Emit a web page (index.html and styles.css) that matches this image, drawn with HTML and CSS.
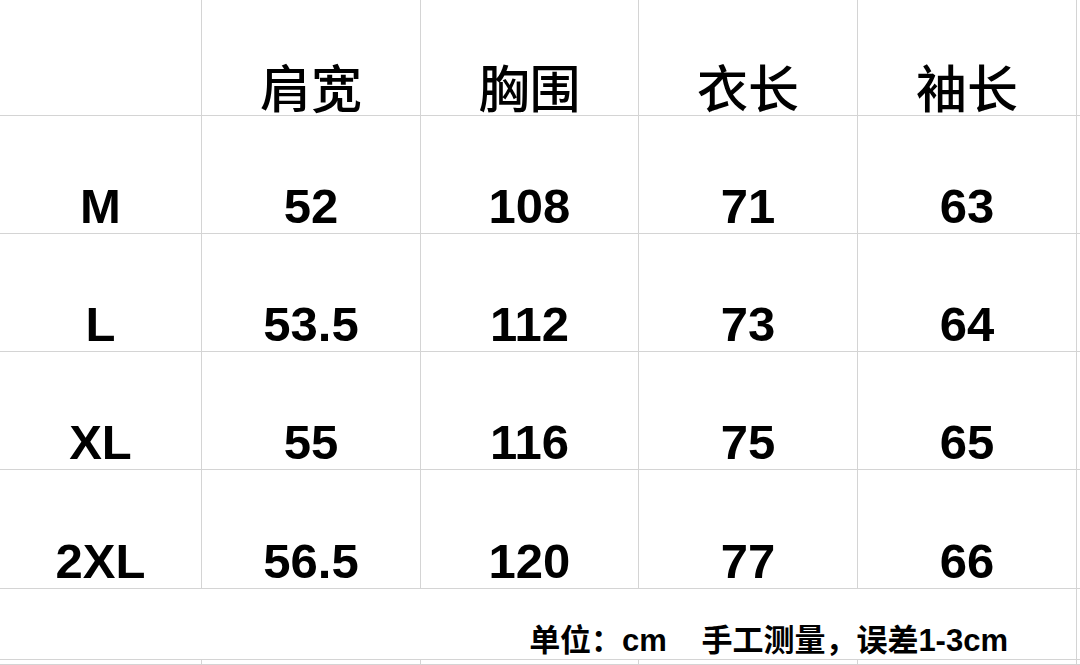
FILE: index.html
```html
<!DOCTYPE html>
<html lang="zh-CN">
<head>
<meta charset="utf-8">
<title>尺码表</title>
<link rel="stylesheet" href="styles.css">
</head>
<body>
<div class="sheet">
  <div class="cell"></div>
  <div class="cell head">肩宽</div>
  <div class="cell head">胸围</div>
  <div class="cell head">衣长</div>
  <div class="cell head">袖长</div>
  <div class="cell edge"></div>

  <div class="cell num">M</div>
  <div class="cell num">52</div>
  <div class="cell num">108</div>
  <div class="cell num">71</div>
  <div class="cell num">63</div>
  <div class="cell edge"></div>

  <div class="cell num">L</div>
  <div class="cell num">53.5</div>
  <div class="cell num">112</div>
  <div class="cell num">73</div>
  <div class="cell num">64</div>
  <div class="cell edge"></div>

  <div class="cell num">XL</div>
  <div class="cell num">55</div>
  <div class="cell num">116</div>
  <div class="cell num">75</div>
  <div class="cell num">65</div>
  <div class="cell edge"></div>

  <div class="cell num">2XL</div>
  <div class="cell num">56.5</div>
  <div class="cell num">120</div>
  <div class="cell num">77</div>
  <div class="cell num">66</div>
  <div class="cell edge"></div>

  <div class="cell note">单位：cm&nbsp;&nbsp;&nbsp;&nbsp;手工测量，误差1-3cm</div>
  <div class="cell edge"></div>

  <div class="cell"></div>
  <div class="cell"></div>
  <div class="cell"></div>
  <div class="cell"></div>
  <div class="cell"></div>
  <div class="cell edge"></div>
</div>
</body>
</html>
```

FILE: styles.css
```css
html, body {
  margin: 0;
  padding: 0;
  background: #ffffff;
}

body {
  width: 1080px;
  height: 665px;
  overflow: hidden;
  font-family: "Liberation Sans", "Noto Sans CJK SC", sans-serif;
  color: #000000;
}

.sheet {
  display: grid;
  grid-template-columns: 202px 219px 218px 219px 219px 1fr;
  grid-template-rows: 116px 118px 118px 118px 119px 71px 1fr;
  height: 665px;
}

.cell {
  box-sizing: border-box;
  border-right: 1px solid #d4d4d4;
  border-bottom: 1px solid #d4d4d4;
  display: flex;
  align-items: flex-end;
  justify-content: center;
  white-space: nowrap;
}

.edge {
  border-right: none;
}

.head {
  font-family: "Noto Sans CJK SC", sans-serif;
  font-weight: 500;
  font-size: 51px;
  line-height: 58px;
  padding-bottom: 0;
}

.num {
  font-size: 49px;
  font-weight: 700;
  line-height: 1;
  padding-bottom: 2px;
}

.note {
  grid-column: 1 / span 5;
  justify-content: flex-end;
  padding-right: 68px;
  padding-bottom: 0;
  font-size: 31px;
  font-weight: 600;
  line-height: 36px;
}
```
